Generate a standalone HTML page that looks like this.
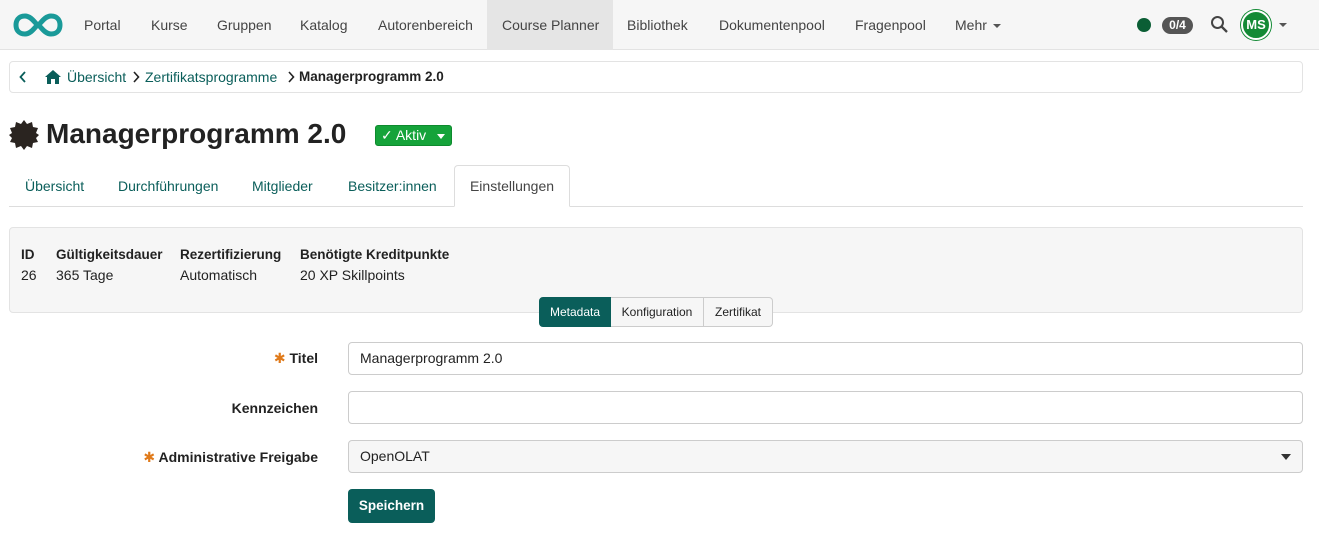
<!DOCTYPE html>
<html><head><meta charset="utf-8"><style>
*{box-sizing:border-box;margin:0;padding:0}
body{width:1319px;height:538px;background:#fff;font-family:"Liberation Sans",sans-serif;color:#222;font-size:14px;position:relative;overflow:hidden}
.nav{position:absolute;left:0;top:0;width:1319px;height:50px;background:#f6f6f6;border-bottom:1px solid #e3e3e3}
.nav a{position:absolute;top:0;height:50px;line-height:50px;font-size:14px;color:#444;text-decoration:none}
.abs{position:absolute}
.crumb{position:absolute;left:9px;top:61px;width:1294px;height:32px;border:1px solid #e3e3e3;border-radius:4px;font-size:14px;line-height:30px}
.teal{color:#0a5e5a}
.tabs a{position:absolute;top:165px;height:42px;line-height:42px;font-size:14px;color:#0a5e5a}
.lbl{position:absolute;font-size:14px;font-weight:bold;text-align:right;right:1001px}
.inp{position:absolute;left:348px;width:955px;height:33px;border:1px solid #ccc;border-radius:4px;font-size:14px;line-height:31px;padding-left:11px}
.b{font-weight:bold;font-size:13.5px}
</style></head><body>
<div class="nav">
<svg class="abs" style="left:12px;top:12px" width="52" height="26" viewBox="0 0 52 26"><path d="M13 4C6 4 4 9 4 13s2 9 9 9 11-9 13-9 6 9 13 9 9-5 9-9-2-9-9-9-11 9-13 9S20 4 13 4z" fill="none" stroke="#1a9a99" stroke-width="5"/></svg>
<a style="left:84px">Portal</a><a style="left:151px">Kurse</a><a style="left:217px">Gruppen</a><a style="left:300px">Katalog</a><a style="left:378px">Autorenbereich</a>
<div class="abs" style="left:487px;top:0;width:126px;height:50px;background:#e5e5e5"></div>
<a style="left:502px">Course Planner</a><a style="left:627px">Bibliothek</a><a style="left:719px">Dokumentenpool</a><a style="left:855px">Fragenpool</a><a style="left:955px">Mehr</a>
<div class="abs" style="left:993px;top:24px;border-left:4px solid transparent;border-right:4px solid transparent;border-top:4px solid #555"></div>
<div class="abs" style="left:1137px;top:18px;width:14px;height:14px;border-radius:50%;background:#0b5e35"></div>
<div class="abs" style="left:1162px;top:17px;width:31px;height:17px;border-radius:9px;background:#555;color:#fff;font-size:12px;font-weight:bold;text-align:center;line-height:17px">0/4</div>
<svg class="abs" style="left:1210px;top:15px" width="19" height="19" viewBox="0 0 19 19"><circle cx="7.5" cy="7.5" r="5.5" fill="none" stroke="#444" stroke-width="2"/><path d="M11.5 11.5L17 17" stroke="#444" stroke-width="2.3"/></svg>
<div class="abs" style="left:1241px;top:10px;width:30px;height:30px;border-radius:50%;background:#138a35;border:2px solid #fff;box-shadow:0 0 0 1px #138a35;color:#fff;font-size:13px;font-weight:bold;text-align:center;line-height:26px">MS</div>
<div class="abs" style="left:1279px;top:23px;border-left:4px solid transparent;border-right:4px solid transparent;border-top:4px solid #555"></div>
</div>
<div class="crumb">
<svg class="abs" style="left:9px;top:9px" width="8" height="12" viewBox="0 0 8 12"><path d="M6 1L1.5 6 6 11" fill="none" stroke="#0a5e5a" stroke-width="1.8"/></svg>
<svg class="abs" style="left:35px;top:8px" width="16" height="14" viewBox="0 0 16 14"><path d="M8 0L0 7h2v7h4V9h4v5h4V7h2z" fill="#0a5e5a"/></svg>
<span class="abs teal" style="left:57px">Übersicht</span>
<svg class="abs" style="left:122px;top:9px" width="8" height="12" viewBox="0 0 8 12"><path d="M2 1l4.5 5L2 11" fill="none" stroke="#222" stroke-width="1.6"/></svg>
<span class="abs teal" style="left:135px">Zertifikatsprogramme</span>
<svg class="abs" style="left:277px;top:9px" width="8" height="12" viewBox="0 0 8 12"><path d="M2 1l4.5 5L2 11" fill="none" stroke="#222" stroke-width="1.6"/></svg>
<span class="abs" style="left:289px;font-weight:bold;font-size:13.5px">Managerprogramm 2.0</span>
</div>
<svg class="abs" style="left:9px;top:120px" width="30" height="30" viewBox="0 0 30 30"><polygon fill="#2a2420" points="15,0 18,4 23,2 24,7 29,8 27,13 30,15 27,18 29,22 24,23 23,28 18,26 15,30 12,26 7,28 6,23 1,22 3,18 0,15 3,13 1,8 6,7 7,2 12,4"/></svg>
<div class="abs" style="left:46px;top:118px;font-size:28px;font-weight:bold;color:#222">Managerprogramm 2.0</div>
<div class="abs" style="left:375px;top:125px;width:77px;height:21px;background:#15a33a;border:1px solid #0e8a2e;border-radius:3px;color:#fff;font-size:14px;line-height:19px;padding-left:5px">✓ Aktiv</div>
<div class="abs" style="left:437px;top:134px;border-left:4px solid transparent;border-right:4px solid transparent;border-top:5px solid #fff"></div>
<div class="tabs">
<div class="abs" style="left:9px;top:206px;width:1294px;border-top:1px solid #ddd"></div>
<a style="left:25px">Übersicht</a><a style="left:118px">Durchführungen</a><a style="left:252px">Mitglieder</a><a style="left:348px">Besitzer:innen</a>
<div class="abs" style="left:454px;top:165px;width:116px;height:42px;border:1px solid #ddd;border-bottom-color:#fff;border-radius:4px 4px 0 0;background:#fff;line-height:40px;text-align:center;color:#444">Einstellungen</div>
</div>
<div class="abs" style="left:9px;top:227px;width:1294px;height:86px;background:#f6f6f6;border:1px solid #e3e3e3;border-radius:4px">
<div class="abs b" style="left:11px;top:19px">ID</div><div class="abs" style="left:11px;top:39px">26</div>
<div class="abs b" style="left:46px;top:19px">Gültigkeitsdauer</div><div class="abs" style="left:46px;top:39px">365 Tage</div>
<div class="abs b" style="left:170px;top:19px">Rezertifizierung</div><div class="abs" style="left:170px;top:39px">Automatisch</div>
<div class="abs b" style="left:290px;top:19px">Benötigte Kreditpunkte</div><div class="abs" style="left:290px;top:39px">20 XP Skillpoints</div>
</div>
<div class="abs" style="left:539px;top:297px;height:30px;display:flex;font-size:12px;line-height:28px">
<div style="width:72px;background:#0a5e5a;color:#fff;text-align:center;border-radius:4px 0 0 4px;border:1px solid #0a5e5a">Metadata</div>
<div style="width:93px;background:#f6f6f6;border:1px solid #ccc;border-left:0;text-align:center">Konfiguration</div>
<div style="width:69px;background:#f6f6f6;border:1px solid #ccc;border-left:0;text-align:center;border-radius:0 4px 4px 0">Zertifikat</div>
</div>
<div class="lbl" style="top:350px"><span style="color:#e07a1a;font-weight:normal">✱</span> Titel</div>
<div class="inp" style="top:342px">Managerprogramm 2.0</div>
<div class="lbl" style="top:400px">Kennzeichen</div>
<div class="inp" style="top:391px"></div>
<div class="lbl" style="top:449px"><span style="color:#e07a1a;font-weight:normal">✱</span> Administrative Freigabe</div>
<div class="inp" style="top:440px;background:#f6f6f6">OpenOLAT</div>
<div class="abs" style="left:1281px;top:454px;border-left:5px solid transparent;border-right:5px solid transparent;border-top:6px solid #333"></div>
<div class="abs" style="left:348px;top:489px;width:87px;height:34px;background:#0a5e5a;border-radius:4px;color:#fff;font-weight:bold;font-size:13.5px;text-align:center;line-height:34px">Speichern</div>
</body></html>
